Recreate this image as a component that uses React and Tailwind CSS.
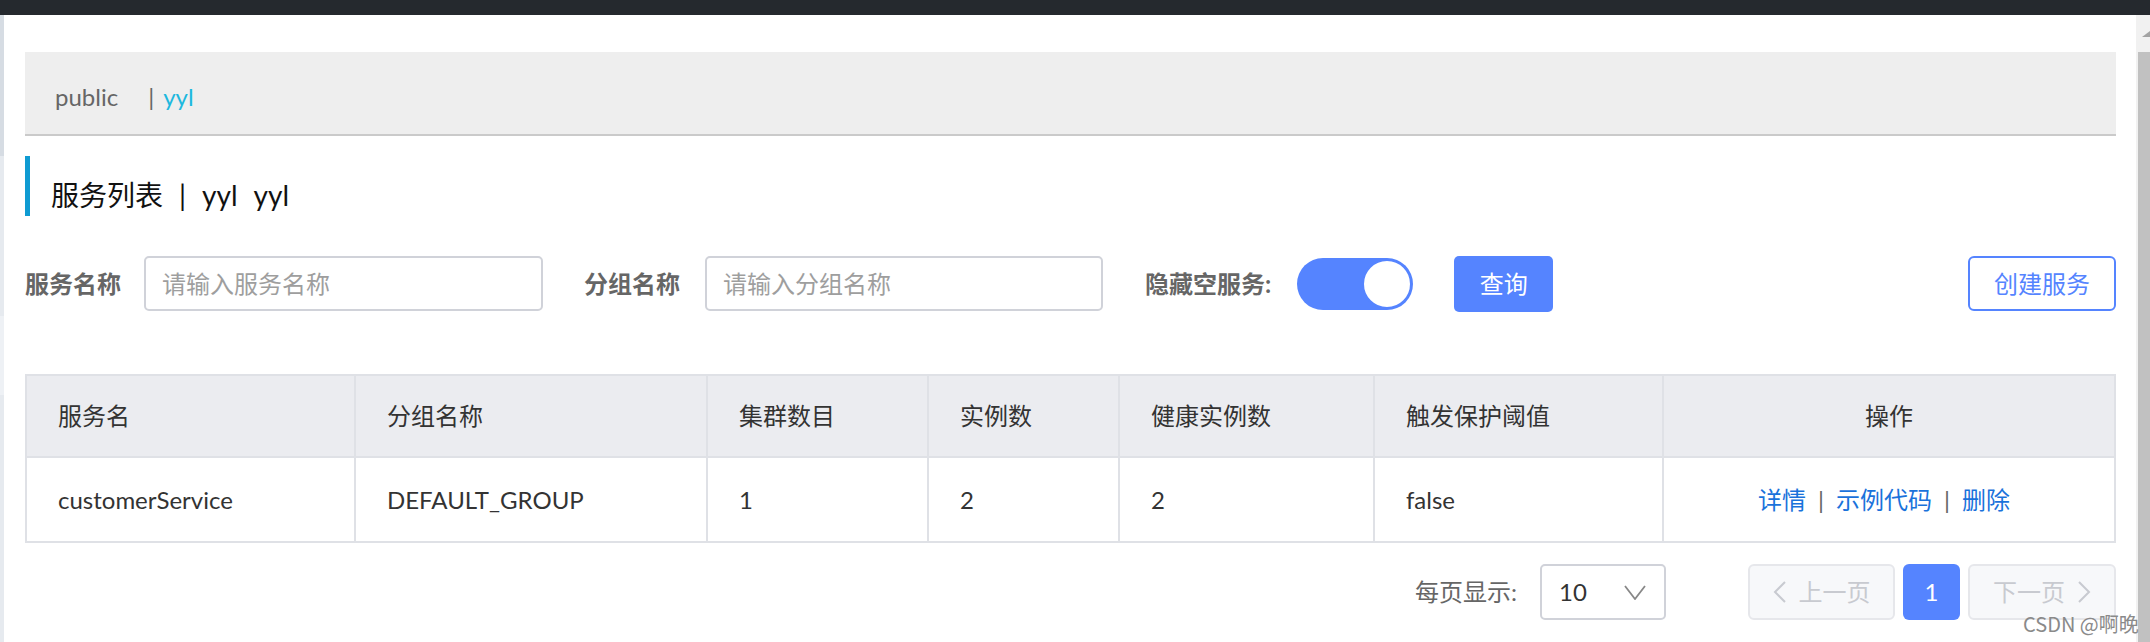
import React from "react";

const cols = [
  "w-[329px] border-r-2",
  "w-[352px] border-r-2",
  "w-[221px] border-r-2",
  "w-[191px] border-r-2",
  "w-[255px] border-r-2",
  "w-[289px] border-r-2",
  "w-[450px] justify-center",
];

const headers = ["服务名", "分组名称", "集群数目", "实例数", "健康实例数", "触发保护阈值", "操作"];
const row = ["customerService", "DEFAULT_GROUP", "1", "2", "2", "false"];

function Chevron({ dir, color, w = 14, h = 22 }) {
  const pts = dir === "left" ? `${w - 2},1 2,${h / 2} ${w - 2},${h - 1}` : `2,1 ${w - 2},${h / 2} 2,${h - 1}`;
  return (
    <svg width={w} height={h} viewBox={`0 0 ${w} ${h}`} fill="none">
      <polyline points={pts} stroke={color} strokeWidth="2" strokeLinejoin="miter" />
    </svg>
  );
}

export default function App() {
  return (
    <div className="relative w-[2150px] h-[642px] overflow-hidden bg-white font-['Lato','Noto_Sans_CJK_SC',sans-serif] text-[#333]">
      <div className="h-[15px] bg-[#25292e]" />
      <div className="flex h-[627px]">
        {/* left strip */}
        <div className="w-[4px] flex flex-col">
          <div className="h-[141px] bg-[#d6dce3]" />
          <div className="h-[160px] bg-[#e6eaef]" />
          <div className="h-[79px] bg-[#eef1f5]" />
          <div className="flex-1 bg-[#e6eaef]" />
        </div>

        {/* main */}
        <div className="flex-1 pl-[21px] pr-[20px] pt-[37px] flex flex-col">
          {/* breadcrumb */}
          <div className="h-[84px] bg-[#eeeeee] border-b-2 border-[#cacaca] flex items-center pl-[30px] pt-[8px] text-[24px]">
            <span className="text-[#666]">public</span>
            <span className="text-[#666] ml-[30px]">|</span>
            <span className="text-[#1db8de] ml-[9px]">yyl</span>
          </div>

          {/* heading */}
          <div className="mt-[20px] h-[60px] flex items-center">
            <div className="w-[5px] h-full bg-[#0f9bd2]" />
            <div className="ml-[21px] pt-[18px] text-[28px] text-[#111] flex items-center">
              <span>服务列表</span>
              <span className="mx-[16px]">|</span>
              <span>yyl</span>
              <span className="ml-[16px]">yyl</span>
            </div>
          </div>

          {/* filter row */}
          <div className="mt-[40px] h-[55px] flex items-center text-[24px]">
            <span className="font-bold text-[#666] w-[96px]">服务名称</span>
            <input
              readOnly
              placeholder="请输入服务名称"
              className="ml-[23px] w-[399px] h-[55px] border-2 border-[#d0d2d9] rounded-[5px] pl-[16px] text-[24px] outline-none placeholder:text-[#9e9e9e]"
            />
            <span className="ml-[41px] font-bold text-[#666] w-[96px]">分组名称</span>
            <input
              readOnly
              placeholder="请输入分组名称"
              className="ml-[25px] w-[398px] h-[55px] border-2 border-[#d0d2d9] rounded-[5px] pl-[16px] text-[24px] outline-none placeholder:text-[#9e9e9e]"
            />
            <span className="ml-[42px] font-bold text-[#666]">隐藏空服务:</span>
            <div className="ml-[26px] w-[116px] h-[52px] rounded-full bg-[#5584ff] flex items-center justify-end pr-[1px]">
              <div className="w-[50px] h-[50px] rounded-full bg-white border-2 border-[#5584ff]" />
            </div>
            <div className="ml-[41px] w-[99px] h-[56px] rounded-[5px] bg-[#5584ff] text-white flex items-center justify-center">
              查询
            </div>
            <div className="ml-auto w-[148px] h-[55px] rounded-[6px] border-2 border-[#5584ff] text-[#5584ff] flex items-center justify-center">
              创建服务
            </div>
          </div>

          {/* table */}
          <div className="mt-[63px] w-[2091px] border-2 border-[#dfe1e6] text-[24px]">
            <div className="flex h-[82px] bg-[#ebecf0] border-b-2 border-[#dfe1e6]">
              {headers.map((h, i) => (
                <div key={h} className={`${cols[i]} border-[#dfe1e6] flex items-center ${i === 6 ? "" : "pl-[31px]"} text-[#333]`}>
                  {h}
                </div>
              ))}
            </div>
            <div className="flex h-[83px]">
              {row.map((v, i) => (
                <div key={i} className={`${cols[i]} border-[#dfe1e6] flex items-center pl-[31px] text-[#333]`}>
                  {v}
                </div>
              ))}
              <div className={`${cols[6]} flex items-center pr-[10px]`}>
                <span className="text-[#1a72db]">详情</span>
                <span className="mx-[12px] text-[#666]">|</span>
                <span className="text-[#1a72db]">示例代码</span>
                <span className="mx-[12px] text-[#666]">|</span>
                <span className="text-[#1a72db]">删除</span>
              </div>
            </div>
          </div>

          {/* pagination */}
          <div className="mt-[21px] h-[56px] flex items-center justify-end text-[24px]">
            <span className="text-[#666]">每页显示:</span>
            <div className="ml-[23px] w-[126px] h-[56px] border-2 border-[#d0d2d9] rounded-[5px] flex items-center pl-[17px] pr-[18px] justify-between">
              <span className="text-[#333]">10</span>
              <svg width="22" height="15" viewBox="0 0 22 15" fill="none">
                <polyline points="1,1 11,14 21,1" stroke="#888" strokeWidth="1.8" />
              </svg>
            </div>
            <div className="ml-[82px] w-[147px] h-[56px] border-2 border-[#e6e7eb] bg-[#f7f8fa] rounded-[6px] flex items-center justify-center gap-[12px] text-[#c8cad0]">
              <Chevron dir="left" color="#c8cad0" />
              <span>上一页</span>
            </div>
            <div className="ml-[8px] w-[57px] h-[56px] bg-[#5584ff] rounded-[6px] flex items-center justify-center text-white">
              1
            </div>
            <div className="ml-[8px] w-[148px] h-[56px] border-2 border-[#e6e7eb] bg-[#f7f8fa] rounded-[6px] flex items-center justify-center gap-[12px] text-[#c8cad0]">
              <span>下一页</span>
              <Chevron dir="right" color="#c8cad0" />
            </div>
          </div>
        </div>

        {/* scrollbar */}
        <div className="w-[14px] bg-[#f1f1f1] flex flex-col">
          <div className="h-[37px] flex items-center justify-end">
            <svg width="8" height="6" viewBox="0 0 8 6">
              <polygon points="0,6 8,6 8,0" fill="#a3a3a3" />
            </svg>
          </div>
          <div className="flex-1 ml-[2px] bg-[#c1c1c1]" />
        </div>
      </div>

      <div className="absolute left-[2023px] top-[609px] text-[20px] text-[#8a8a8a] font-['Noto_Sans_CJK_SC',sans-serif]">
        CSDN @啊晚
      </div>
    </div>
  );
}
